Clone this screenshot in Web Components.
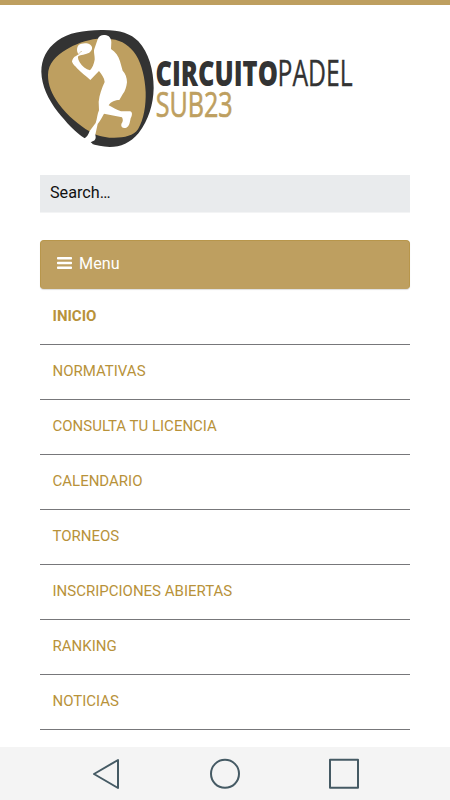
<!DOCTYPE html>
<html lang="es">
<head>
<meta charset="utf-8">
<title>Circuito Padel Sub23</title>
<style>
html, body { margin: 0; height: 100%; }
body { background: #fff; font-family: Roboto, "Liberation Sans", sans-serif; overflow: hidden; }
</style>
</head>
<body>
<padel-page></padel-page>
<script>
class Base extends HTMLElement {
  connectedCallback() {
    if (this.shadowRoot) return;
    this.attachShadow({ mode: 'open' }).innerHTML = this.view();
  }
}

customElements.define('padel-logo', class extends Base {
  view() {
    return `<style>:host{display:block;height:135px}svg{display:block}text{font-family:"Open Sans","Noto Sans",sans-serif}</style>
    <svg width="390" height="135" viewBox="0 0 390 135">
      <g transform="scale(.33333)">
        <path fill="#333" d="M34 155C34 119 49 86 82 62C115 38 160 31 214 30C268 29 302 40 325 64C356 97 371 151 371 204C370 254 356 299 326 339C300 369 273 381 239 381C218 380 198 377 180 370L164 355C137 338 109 307 83 275C54 237 35 197 34 155Z"/>
        <path fill="#be9f60" d="M54 165C54 130 79 106 108 89C135 72 169 60 202 56L245 58C276 61 301 79 318 105C336 134 345 174 347 216C348 256 342 297 324 328C309 350 276 355 238 353C221 351 204 347 193 342L177 333C150 317 113 288 86 251C65 222 54 196 54 165Z"/>
        <path fill="#fff" d="M203 58C207 47 215 44 225 45C237 46 244 54 244 67L243 87C257 96 265 108 270 124L278 152C286 160 291 173 291 187C289 201 286 214 278 223L268 240C256 240 243 244 236 256C247 261 260 271 273 274L300 274C307 276 308 284 302 295C299 309 298 319 289 323C279 326 272 321 274 312C279 306 280 299 276 292C258 288 240 284 222 281C216 292 210 303 203 312L196 344C199 355 196 361 188 364L182 367L188 371L180 374L160 357C171 351 175 344 179 333L197 309C202 295 202 281 207 271L206 245C208 225 216 203 224 186C223 174 216 164 207 153L181 180C168 168 153 158 141 145C137 138 129 135 126 125C126 118 132 110 138 108L146 103C139 95 140 82 146 75C154 69 171 67 181 74C190 81 187 92 176 99C165 104 153 104 145 108C142 114 146 121 150 128C156 139 168 147 180 151C187 143 192 132 194 119C195 106 189 94 194 84Z"/>
        <path fill="none" stroke="#be9f60" stroke-width="1.5" d="M146 103C148 98 151 95 156 94"/>
      </g>
      <g transform="translate(125.5 66.3) scale(.68 1)"><text font-size="36" font-weight="800" fill="#333" textLength="180" lengthAdjust="spacingAndGlyphs">CIRCUITO</text></g>
      <g transform="translate(247.5 66.3) scale(.69 1)"><text font-size="36" font-weight="400" fill="#333" stroke="#333" stroke-width=".35" textLength="109" lengthAdjust="spacingAndGlyphs">PADEL</text></g>
      <g transform="translate(125.7 97.2) scale(.7 1)"><text font-size="35.500" font-weight="400" fill="#be9f60" stroke="#be9f60" stroke-width=".7" textLength="110" lengthAdjust="spacingAndGlyphs">SUB23</text></g>
    </svg>`;
  }
});

customElements.define('search-box', class extends Base {
  view() {
    return `<style>:host{display:block;box-sizing:border-box;height:38px;padding:0 10px;background:#e9ebed;border-bottom:1px solid #f3f4f5;color:#111;font-size:16.200px;line-height:35px}</style><slot></slot>`;
  }
});

customElements.define('menu-button', class extends Base {
  view() {
    return `<style>:host{display:flex;align-items:center;box-sizing:border-box;height:49px;padding:0 16px 2px;gap:7px;background:#be9f60;border:1px solid #b8964b;border-bottom-color:#be9f60;border-radius:4px;box-shadow:0 1px 1px #ddd;color:#fff;font-size:16.200px;line-height:20px}svg{display:block;margin-bottom:1px}</style>
    <svg width="15" height="14"><path fill="#fff" d="M.8 1h13.400q.8 0 .8.8v1q0 .8-.8.8H.8Q0 3.600 0 2.800v-1Q0 1 .8 1ZM.8 5.700h13.400q.8 0 .8.8v1q0 .8-.8.8H.8Q0 8.300 0 7.500v-1q0-.8.8-.8ZM.8 10.400h13.400q.8 0 .8.8v1q0 .8-.8.8H.8Q0 13 0 12.200v-1q0-.8.8-.8Z"/></svg><span><slot></slot></span>`;
  }
});

customElements.define('menu-item', class extends Base {
  view() {
    return `<style>:host{display:block;box-sizing:border-box;height:55px;padding:0 12.500px;border-bottom:1px solid #77777a;color:#b8923a;font-size:15px;line-height:53px}:host([current]){font-weight:700}</style><slot></slot>`;
  }
});

customElements.define('system-bar', class extends Base {
  view() {
    return `<style>:host{display:flex;justify-content:center;height:53px;background:#f4f4f4}svg{display:block}</style>
    <svg width="300" height="53" fill="none" stroke="#455a64" stroke-width="2" stroke-linejoin="round">
      <path d="M43 13V41L19 27Z"/><circle cx="150" cy="26.800" r="14"/><path d="M255 12.800h28v28h-28Z"/>
    </svg>`;
  }
});

customElements.define('padel-page', class extends Base {
  view() {
    const items = ['NORMATIVAS', 'CONSULTA TU LICENCIA', 'CALENDARIO', 'TORNEOS', 'INSCRIPCIONES ABIERTAS', 'RANKING', 'NOTICIAS'];
    return `<style>
      :host{display:flex;flex-direction:column;box-sizing:border-box;height:800px;border-top:5px solid #be9f60}
      main{flex:1;padding:15px 40px 0}
      padel-logo{margin:0 -10px 20px}
      search-box{margin-bottom:27px}
      nav{padding-top:1px}
    </style>
    <main><padel-logo></padel-logo><search-box>Search…</search-box><menu-button>Menu</menu-button>
    <nav><menu-item current>INICIO</menu-item>${items.map(t => `<menu-item>${t}</menu-item>`).join('')}</nav></main>
    <system-bar></system-bar>`;
  }
});
</script>
</body>
</html>
